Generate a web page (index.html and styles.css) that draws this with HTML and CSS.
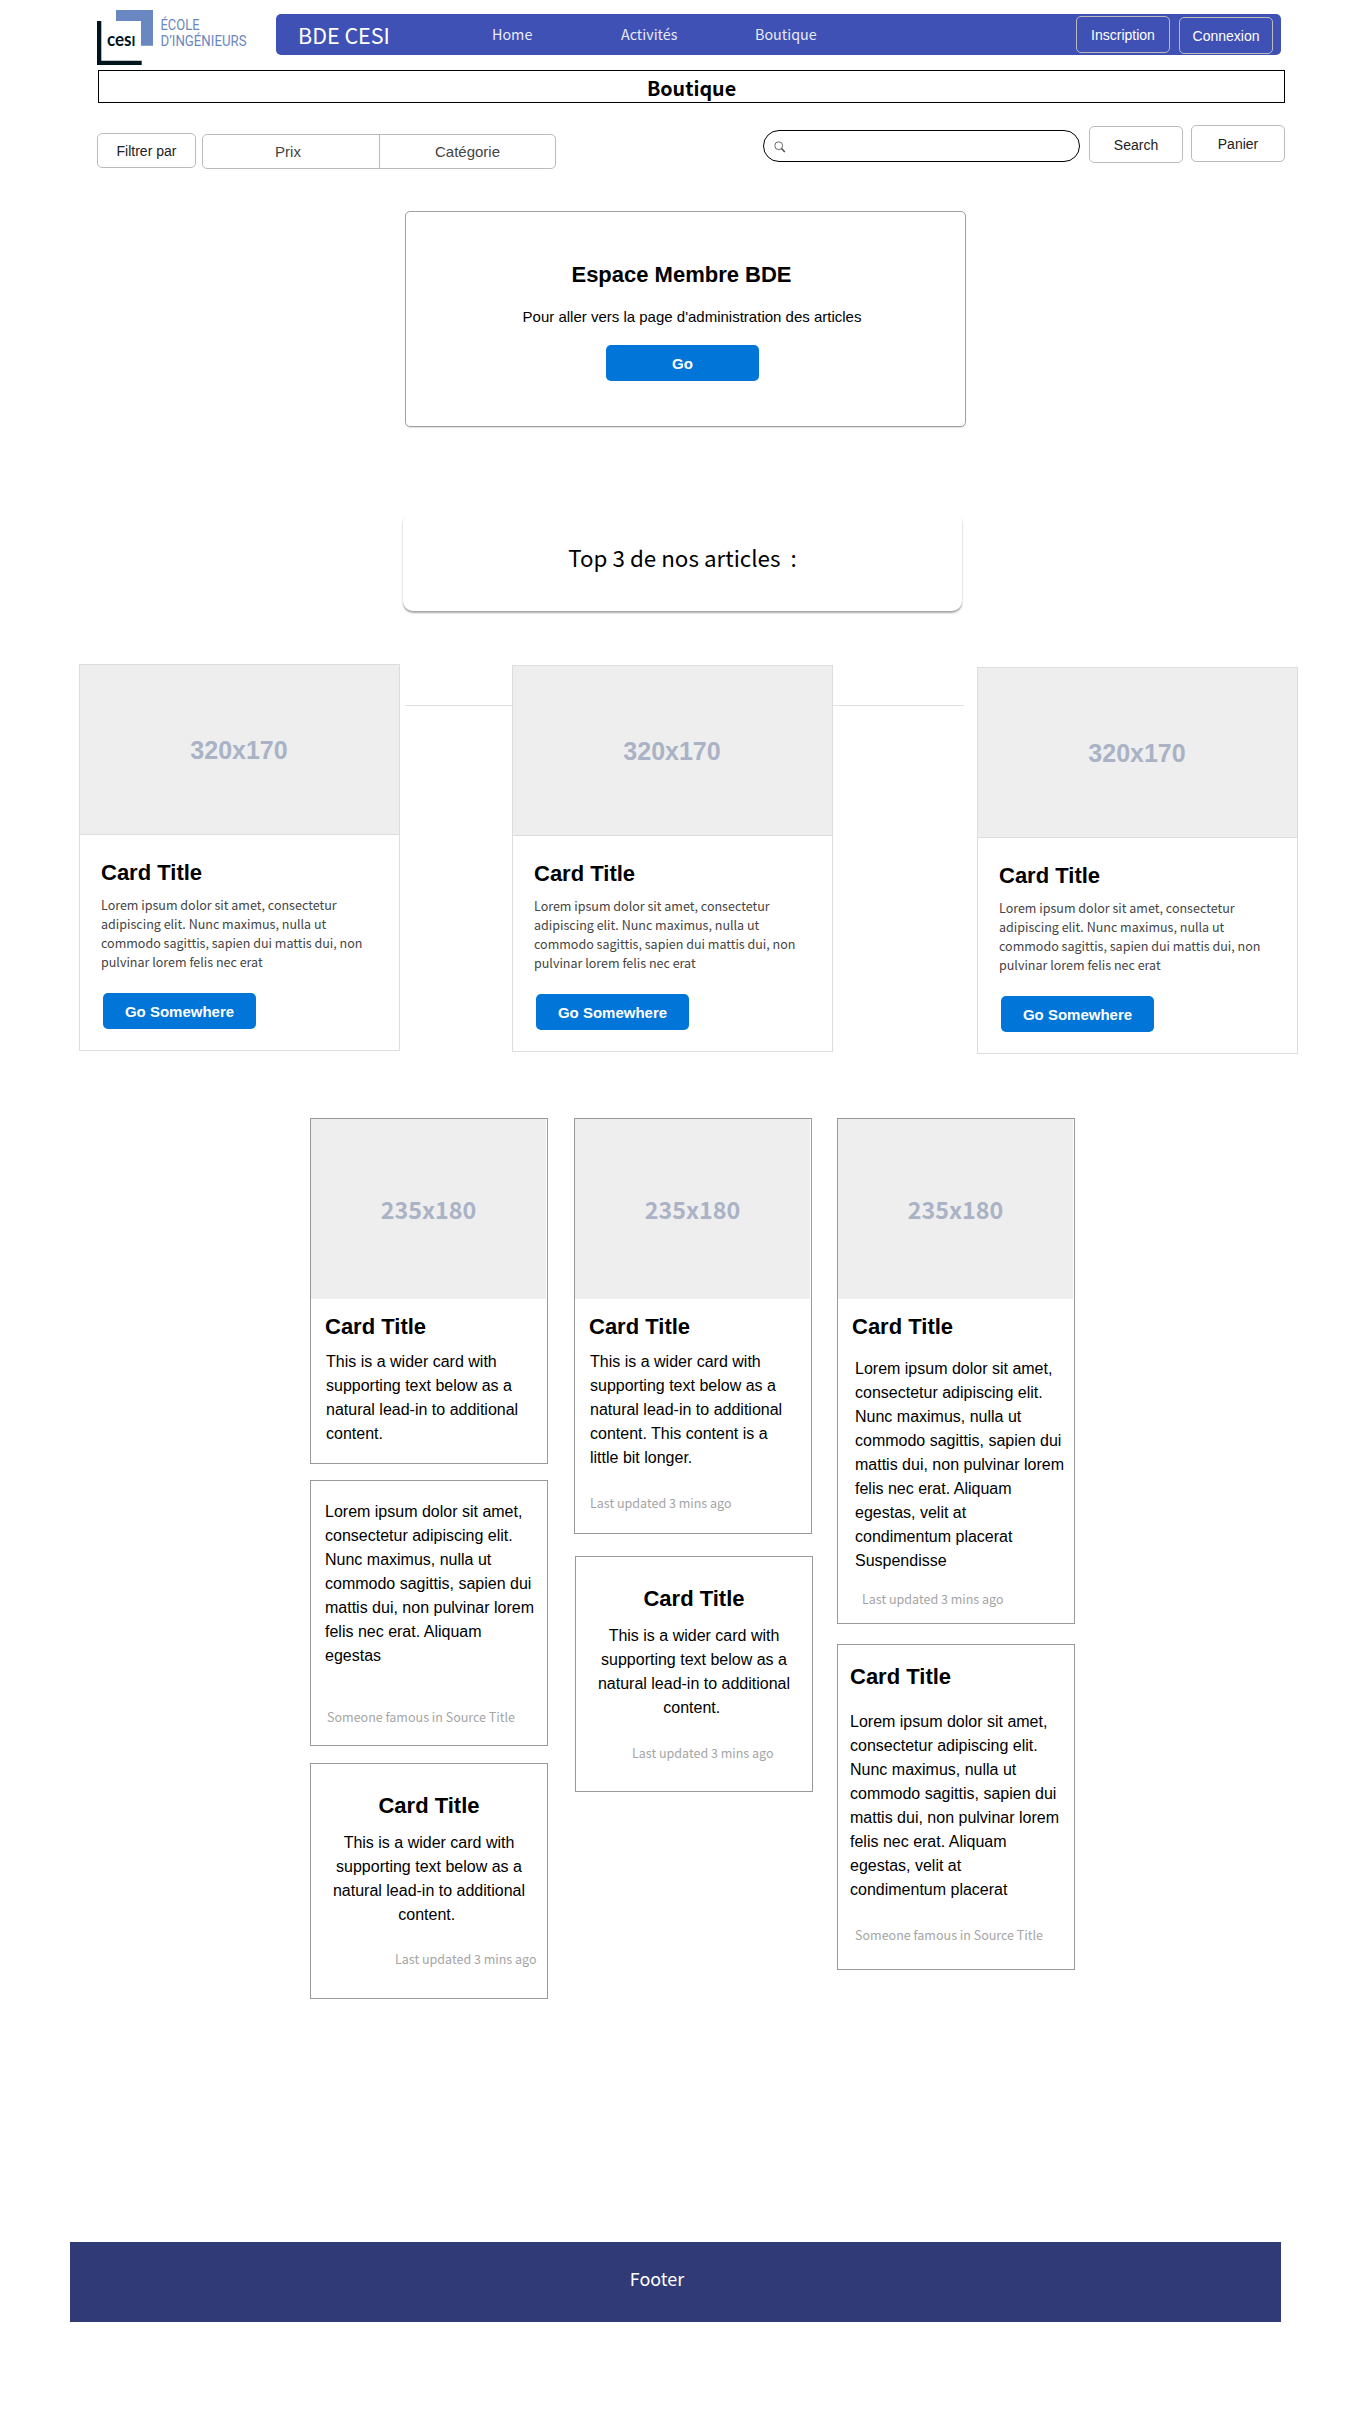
FILE: index.html
```html
<!DOCTYPE html>
<html lang="fr">
<head>
<meta charset="utf-8">
<title>BDE CESI - Boutique</title>
<link rel="stylesheet" href="styles.css">
</head>
<body>
<header class="header">
  <svg class="logo" viewBox="97 10 179 56" width="179" height="56" role="img" aria-label="CESI École d'ingénieurs">
    <path d="M97 21h4.300v39.700h40.400v4.300H97z" fill="#00141e"/>
    <path d="M116 10h37v35.700h-12V21H116z" fill="#6987c1"/>
    <text class="logo-mark" x="107" y="46" textLength="28.500" lengthAdjust="spacingAndGlyphs">ces<tspan class="logo-mark-i">I</tspan></text>
    <text class="logo-text" x="160.500" y="30" textLength="39" lengthAdjust="spacingAndGlyphs">ÉCOLE</text>
    <text class="logo-text" x="160.500" y="45.700" textLength="86" lengthAdjust="spacingAndGlyphs">D’INGÉNIEURS</text>
  </svg>
  <nav class="nav">
    <a class="brand">BDE CESI</a>
    <a class="link link-home">Home</a>
    <a class="link link-activities">Activités</a>
    <a class="link">Boutique</a>
    <div class="account">
      <button class="btn btn-nav">Inscription</button>
      <button class="btn btn-nav btn-login">Connexion</button>
    </div>
  </nav>
</header>

<h1 class="page-title">Boutique</h1>

<section class="toolbar">
  <button class="btn btn-filter">Filtrer par</button>
  <div class="segments"><span class="segment segment-price">Prix</span><span class="segment segment-category">Catégorie</span></div>
  <div class="search">
    <svg width="12" height="12" viewBox="0 0 12 12" fill="none" stroke="#444"><circle cx="4.700" cy="4.700" r="3.900" stroke-width=".8"/><path d="M7.500 7.500L10.800 11" stroke-width="1.300"/></svg>
  </div>
  <button class="btn btn-search">Search</button>
  <button class="btn btn-cart">Panier</button>
</section>

<section class="member">
  <h2 class="title">Espace Membre BDE</h2>
  <p class="member-text">Pour aller vers la page d'administration des articles</p>
  <button class="btn-primary">Go</button>
</section>

<h2 class="top-title">Top 3 de nos articles&nbsp; :</h2>

<section class="products">
  <article class="product">
    <div class="product-image">320x170</div>
    <h3 class="title">Card Title</h3>
    <p class="product-text">Lorem ipsum dolor sit amet, consectetur<br>adipiscing elit. Nunc maximus, nulla ut<br>commodo sagittis, sapien dui mattis dui, non<br>pulvinar lorem felis nec erat</p>
    <button class="btn-primary">Go Somewhere</button>
  </article>
  <article class="product product-second">
    <div class="product-image">320x170</div>
    <h3 class="title">Card Title</h3>
    <p class="product-text">Lorem ipsum dolor sit amet, consectetur<br>adipiscing elit. Nunc maximus, nulla ut<br>commodo sagittis, sapien dui mattis dui, non<br>pulvinar lorem felis nec erat</p>
    <button class="btn-primary">Go Somewhere</button>
  </article>
  <article class="product product-third">
    <div class="product-image">320x170</div>
    <h3 class="title">Card Title</h3>
    <p class="product-text">Lorem ipsum dolor sit amet, consectetur<br>adipiscing elit. Nunc maximus, nulla ut<br>commodo sagittis, sapien dui mattis dui, non<br>pulvinar lorem felis nec erat</p>
    <button class="btn-primary">Go Somewhere</button>
  </article>
</section>

<section class="columns">
  <div class="column">
    <article class="card card-a">
      <div class="card-image">235x180</div>
      <h3 class="title">Card Title</h3>
      <p class="text">This is a wider card with<br>supporting text below as a<br>natural lead-in to additional<br>content.</p>
    </article>
    <article class="card card-b">
      <p class="text">Lorem ipsum dolor sit amet,<br>consectetur adipiscing elit.<br>Nunc maximus, nulla ut<br>commodo sagittis, sapien dui<br>mattis dui, non pulvinar lorem<br>felis nec erat. Aliquam<br>egestas</p>
      <p class="note">Someone famous in Source Title</p>
    </article>
    <article class="card card-c centered">
      <h3 class="title">Card Title</h3>
      <p class="text">This is a wider card with<br>supporting text below as a<br>natural lead-in to additional<br>content.&nbsp;</p>
      <p class="note">Last updated 3 mins ago</p>
    </article>
  </div>
  <div class="column">
    <article class="card card-d">
      <div class="card-image">235x180</div>
      <h3 class="title">Card Title</h3>
      <p class="text">This is a wider card with<br>supporting text below as a<br>natural lead-in to additional<br>content. This content is a<br>little bit longer.</p>
      <p class="note">Last updated 3 mins ago</p>
    </article>
    <article class="card card-e centered">
      <h3 class="title">Card Title</h3>
      <p class="text">This is a wider card with<br>supporting text below as a<br>natural lead-in to additional<br>content.&nbsp;</p>
      <p class="note">Last updated 3 mins ago</p>
    </article>
  </div>
  <div class="column">
    <article class="card card-f">
      <div class="card-image">235x180</div>
      <h3 class="title">Card Title</h3>
      <p class="text">Lorem ipsum dolor sit amet,<br>consectetur adipiscing elit.<br>Nunc maximus, nulla ut<br>commodo sagittis, sapien dui<br>mattis dui, non pulvinar lorem<br>felis nec erat. Aliquam<br>egestas, velit at<br>condimentum placerat<br>Suspendisse</p>
      <p class="note">Last updated 3 mins ago</p>
    </article>
    <article class="card card-g">
      <h3 class="title">Card Title</h3>
      <p class="text">Lorem ipsum dolor sit amet,<br>consectetur adipiscing elit.<br>Nunc maximus, nulla ut<br>commodo sagittis, sapien dui<br>mattis dui, non pulvinar lorem<br>felis nec erat. Aliquam<br>egestas, velit at<br>condimentum placerat</p>
      <p class="note">Someone famous in Source Title</p>
    </article>
  </div>
</section>

<footer class="footer">Footer</footer>
</body>
</html>
```
FILE: styles.css
```css
* { box-sizing: border-box; margin: 0; padding: 0; }

body {
  width: 1348px;
  min-height: 2433px;
  background: #fff;
  color: #000;
  font-family: "Liberation Sans", Arial, sans-serif;
  white-space: nowrap;
}

.brand, .link, .page-title, .top-title, .product-text, .card-image, .note, .footer {
  font-family: "Noto Sans CJK JP", "Noto Sans", sans-serif;
}

button { font-family: inherit; }

/* Header */
.header { display: flex; height: 70px; padding-left: 97px; }
.logo { margin-top: 10px; }
.logo-mark { font: bold 18px Lato, sans-serif; fill: #00141e; }
.logo-mark-i { font-size: 14px; }
.logo-text { font: 14.500px Roboto, sans-serif; fill: #6987c1; }

.nav {
  display: flex;
  width: 1005px;
  height: 41px;
  margin-top: 14px;
  padding: 0 8px 0 22px;
  background: #3f51b5;
  border-radius: 5px;
}
.brand { width: 194px; font-size: 21.500px; line-height: 41px; color: #fff; }
.link { font-size: 14.330px; line-height: 40px; color: #e8eaf6; }
.link-home { width: 129px; }
.link-activities { width: 134px; }
.account { display: flex; gap: 9px; margin-left: auto; }

.btn {
  width: 94px;
  height: 37px;
  border: 1px solid #bbb;
  border-radius: 5px;
  background: transparent;
  color: #222;
  font-size: 14px;
}
.btn-nav { margin-top: 2px; color: #fff; }
.btn-login { margin-top: 3px; }

.page-title {
  width: 1187px;
  height: 33px;
  margin-left: 98px;
  border: 1px solid #000;
  font-size: 19.700px;
  line-height: 33px;
  text-align: center;
}

/* Filters and search */
.toolbar { display: flex; height: 66px; padding: 22px 0 0 97px; }
.btn-filter { width: 99px; height: 35px; margin-top: 8px; }
.segments {
  display: flex;
  width: 354px;
  height: 35px;
  margin: 9px 0 0 6px;
  border: 1px solid #bbb;
  border-radius: 5px;
  color: #444;
  font-size: 15px;
  line-height: 33px;
  text-align: center;
}
.segment-price { width: 177px; padding-right: 6px; border-right: 1px solid #bbb; }
.segment-category { flex: 1; }
.search {
  width: 317px;
  height: 32px;
  margin: 5px 0 0 207px;
  padding: 10px;
  border: 1px solid #000;
  border-radius: 16px;
}
.search svg { display: block; }
.btn-search { margin: 1px 0 0 9px; }
.btn-cart { margin-left: 8px; }

/* Member area */
.title { font-size: 22px; line-height: 26px; font-weight: bold; }
.btn-primary {
  display: block;
  width: 153px;
  height: 36px;
  border: 0;
  border-radius: 5px;
  background: #0275d8;
  color: #fff;
  font-size: 15px;
  font-weight: bold;
}
.member {
  width: 561px;
  height: 216px;
  margin: 42px 0 0 405px;
  padding-top: 50px;
  border: 1px solid #a0a0a0;
  border-radius: 5px;
  box-shadow: 0 1px 1px rgba(0, 0, 0, .12);
  text-align: center;
}
.member .title { padding-right: 8px; }
.member-text { margin-top: 18px; padding-left: 13px; font-size: 15px; line-height: 22px; }
.member .btn-primary { margin: 17px 0 0 200px; }

.top-title {
  width: 559px;
  height: 99px;
  margin: 85px 0 0 403px;
  border-radius: 10px;
  box-shadow: 0 2px 2px rgba(0, 0, 0, .35);
  font-size: 22.400px;
  font-weight: normal;
  line-height: 90px;
  text-align: center;
}

/* Top articles */
.products {
  position: relative;
  display: flex;
  align-items: flex-start;
  height: 507px;
  padding: 53px 0 0 79px;
}
.products::before {
  content: "";
  position: absolute;
  z-index: -1;
  top: 94px;
  left: 405px;
  width: 559px;
  height: 1px;
  background: #e1e1e1;
}
.product { width: 321px; height: 387px; border: 1px solid #ddd; background: #fff; }
.product-second { margin: 1px 0 0 112px; }
.product-third { margin: 3px 0 0 144px; }
.product-image {
  height: 170px;
  padding-right: 1px;
  border-bottom: 1px solid #ddd;
  background: #eee;
  color: #aab2c5;
  font-size: 25px;
  font-weight: bold;
  line-height: 171px;
  text-align: center;
}
.product .title { margin: 25px 0 0 21px; }
.product-text { margin: 9px 0 0 21px; color: #444; font-size: 12.530px; line-height: 19px; }
.product .btn-primary { margin: 22px 0 0 23px; }

/* Card columns */
.columns { display: flex; gap: 26px; height: 1124px; padding-left: 310px; }
.column { width: 238px; }
.column:nth-child(3) { margin-left: -1px; }
.card { width: 238px; border: 1px solid #999; }
.card-image {
  width: 235px;
  height: 180px;
  background: #eee;
  color: #aab2c5;
  font-size: 23.300px;
  font-weight: bold;
  line-height: 180px;
  text-align: center;
}
.card .title { padding: 15px 0 0 14px; }
.text { padding: 10px 0 0 15px; font-size: 16px; line-height: 24px; }
.note { color: #a5a5a5; font-size: 12.530px; line-height: 20px; }
.card.centered .title { padding: 29px 0 0; text-align: center; }
.centered .text { padding: 12px 0 0; text-align: center; }

.card-a { height: 346px; }
.card-b { height: 266px; margin-top: 16px; }
.card-b .text { padding: 19px 0 0 14px; }
.card-b .note { padding: 39px 0 0 16px; }
.card-c { height: 236px; margin-top: 17px; }
.card-c .note { padding: 22px 0 0 84px; }
.card-d { height: 416px; }
.card-d .note { padding: 23px 0 0 15px; }
.card-e { height: 236px; margin: 22px 0 0 1px; }
.card-e .note { padding: 23px 0 0 56px; }
.card-f { height: 506px; }
.card-f .text { padding: 17px 0 0 17px; }
.card-f .note { padding: 16px 0 0 24px; }
.card-g { height: 326px; margin-top: 20px; }
.card-g .title { padding: 19px 0 0 12px; }
.card-g .text { padding: 20px 0 0 12px; }
.card-g .note { padding: 23px 0 0 17px; }

.footer {
  width: 1211px;
  height: 80px;
  margin-left: 70px;
  padding-right: 37px;
  background: #2f3a76;
  color: #fff;
  font-size: 17.900px;
  line-height: 73px;
  text-align: center;
}
```
